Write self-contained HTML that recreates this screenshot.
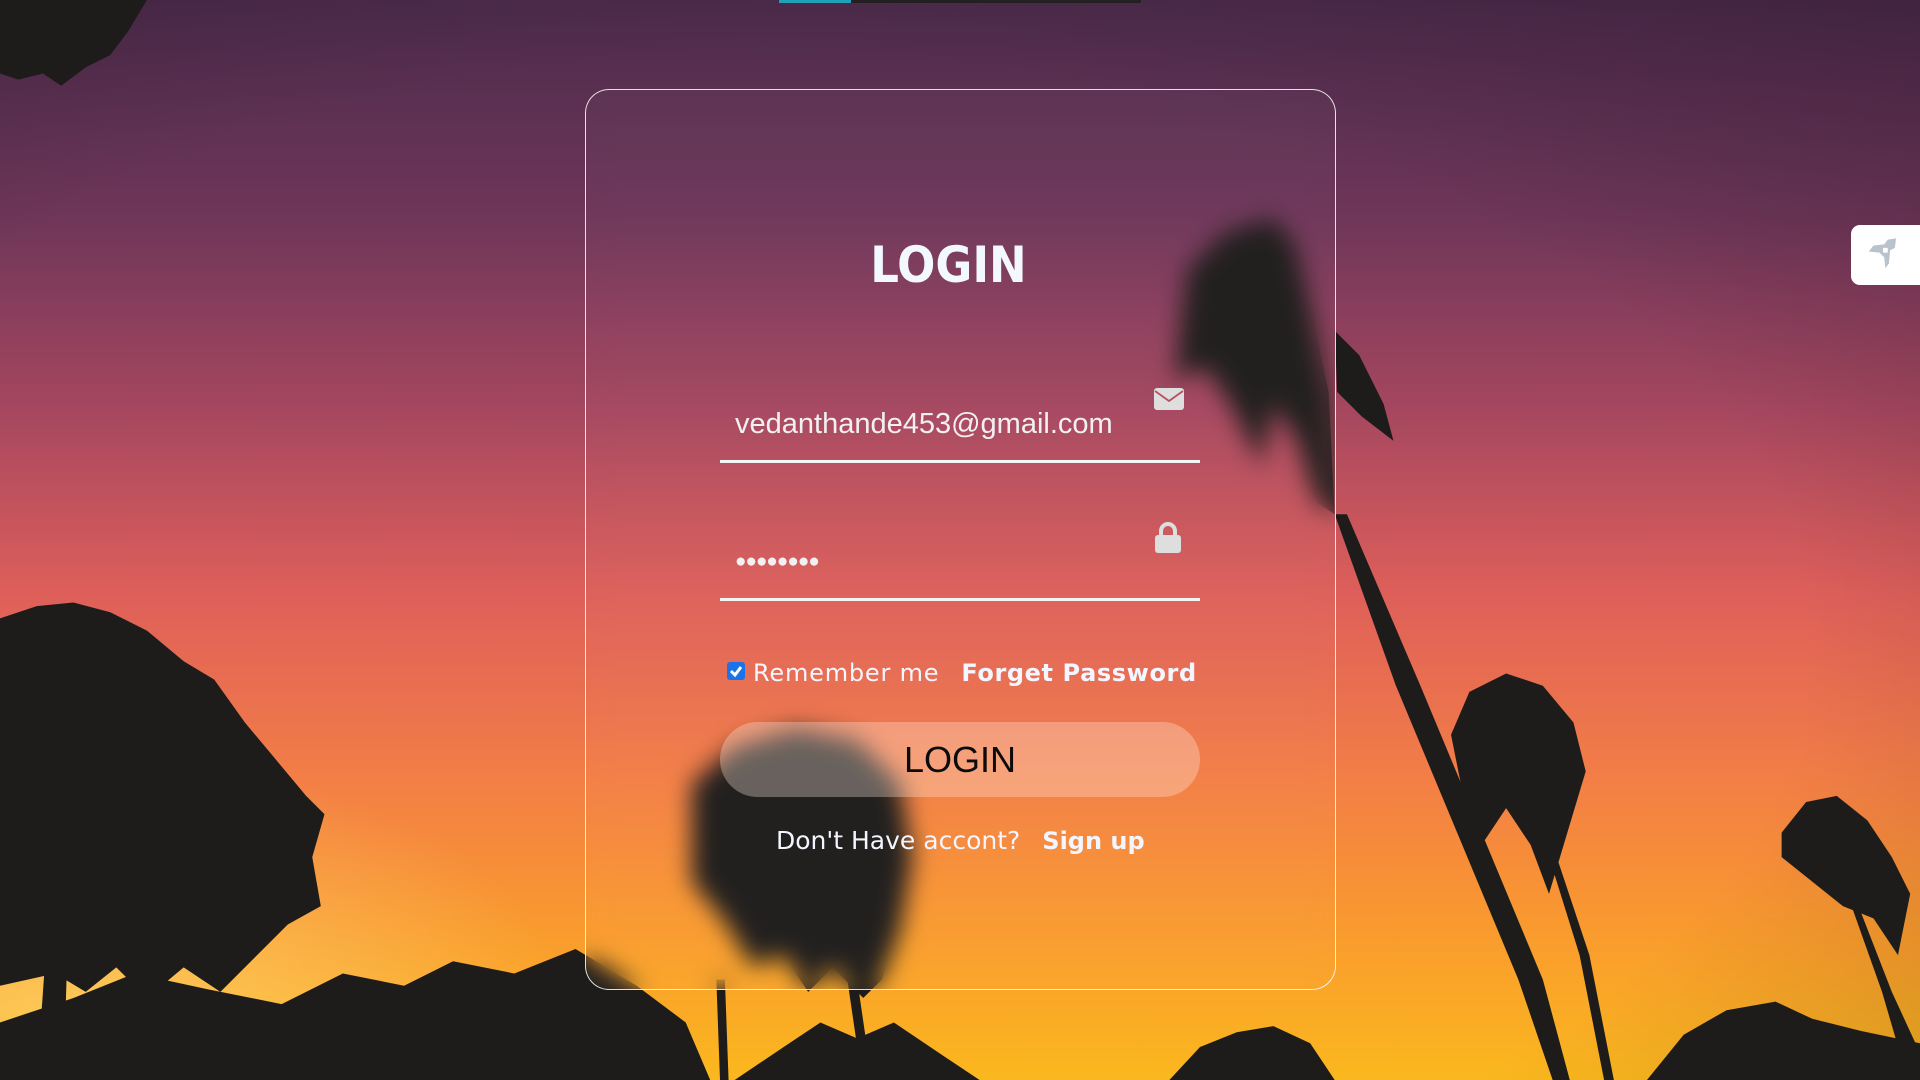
<!DOCTYPE html>
<html><head><meta charset="utf-8">
<style>
html,body{margin:0;padding:0;width:1920px;height:1080px;overflow:hidden;}
body{position:relative;font-family:"Liberation Sans",sans-serif;background:#b04a60;}
#bg{position:absolute;left:0;top:0;width:1920px;height:1080px;}
.card{position:absolute;left:585px;top:89px;width:749px;height:899px;border:1.5px solid rgba(255,255,255,.85);border-radius:24px;backdrop-filter:blur(12px);-webkit-backdrop-filter:blur(12px);background:rgba(255,255,255,.02);}
.title{position:absolute;left:0;width:725px;top:146px;text-align:center;color:#f3f8ff;font:bold 50px "DejaVu Sans Condensed","DejaVu Sans",sans-serif;letter-spacing:0px;}
.line{position:absolute;left:720px;width:480px;height:3px;background:#f4f4f4;}
.email{position:absolute;left:735px;top:408px;color:#f3f0f2;font-size:29px;}
.dots{position:absolute;left:735px;top:551px;color:#f3f0f2;font-size:19px;letter-spacing:-1px;}
.row{position:absolute;top:659px;left:727px;color:#f3f6ff;font:24px "DejaVu Sans",sans-serif;white-space:nowrap;letter-spacing:.8px;}
.cb{display:inline-block;width:18px;height:18px;background:#1a73e8;border-radius:3px;vertical-align:1px;margin-right:8px;position:relative;}
.btn{position:absolute;left:720px;top:722px;width:480px;height:75px;border-radius:38px;background:rgba(255,235,225,.32);text-align:center;line-height:75px;font-size:36px;color:#0b0b0b;}
.bot{position:absolute;top:826px;left:776px;color:#f3f6ff;font:25px "DejaVu Sans",sans-serif;white-space:nowrap;}
</style></head><body>
<svg id="bg" viewBox="0 0 1568 882" preserveAspectRatio="none">
<defs>
<linearGradient id="g" x1="0" y1="0" x2="0" y2="1">
<stop offset="0" stop-color="#4c2b4b"/>
<stop offset=".2" stop-color="#6e3659"/>
<stop offset=".38" stop-color="#a6475f"/>
<stop offset=".55" stop-color="#de5f5a"/>
<stop offset=".72" stop-color="#f37e46"/>
<stop offset=".86" stop-color="#f99a2e"/>
<stop offset="1" stop-color="#fbb81e"/>
</linearGradient>
<radialGradient id="v" cx=".4" cy=".6" r=".9">
<stop offset=".6" stop-color="#000" stop-opacity="0"/>
<stop offset="1" stop-color="#1a0a1a" stop-opacity=".25"/>
</radialGradient>
<radialGradient id="y" cx=".05" cy=".95" r=".25">
<stop offset="0" stop-color="#ffe080" stop-opacity=".6"/>
<stop offset="1" stop-color="#ffe080" stop-opacity="0"/>
</radialGradient>
</defs>
<rect width="1568" height="882" fill="url(#g)"/>
<rect width="1568" height="882" fill="url(#v)"/>
<rect width="1568" height="882" fill="url(#y)"/>
<g fill="#1e1c1b">
<path d="M0 0H120L105 25 90 45 70 55 50 70 35 60 15 65 0 60Z"/>
<path d="M0 505 30 495 60 492 90 500 120 515 150 540 175 555 200 590 225 620 250 650 265 665 255 700 262 740 235 755 205 785 180 810 150 790 120 815 95 790 70 810 45 795 0 805Z"/>
<path d="M30 882 40 740 48 700 56 740 52 882Z"/>
<path d="M0 835 60 815 110 795 170 808 230 820 280 795 330 805 370 785 420 795 470 775 520 805 560 835 580 882H0Z"/>
<path d="M600 882 640 855 670 835 700 848 730 835 770 862 800 882Z"/>
<path d="M955 882 980 855 1010 843 1040 838 1070 852 1090 882Z"/>
<path d="M1345 882 1375 845 1410 825 1450 818 1480 832 1520 842 1568 852V882Z"/>
<path d="M1090 420 1100 420 1160 560 1210 680 1260 800 1282 882H1268L1240 800 1190 680 1140 560Z"/>
<path d="M1262 690 1268 690 1298 780 1318 882H1310L1290 780Z"/>
<path d="M1505 720 1510 720 1545 810 1568 860V882H1558L1537 810Z"/>
<path d="M1185 600 1200 565 1230 550 1260 560 1285 590 1295 630 1280 680 1265 730 1250 690 1230 660 1210 690 1195 650Z"/>
<path d="M1455 680 1475 655 1500 650 1525 670 1545 700 1560 730 1550 780 1530 750 1505 740 1480 720 1455 700Z"/>
<path d="M1090 270 1110 290 1130 330 1138 360 1112 340 1092 320Z"/>
<path d="M970 220 1000 190 1040 178 1058 200 1070 250 1085 320 1090 420 1075 410 1060 360 1040 330 1030 380 1005 330 985 300 960 310 965 260Z"/>
<path d="M565 640 600 610 650 595 700 605 735 640 745 700 735 760 720 800 705 815 680 790 660 810 640 780 615 790 590 750 565 720Z"/>
<path d="M585 800 592 800 595 882H588Z"/>
<path d="M692 800 700 800 712 882H704Z"/>
</g>
</svg>
<div style="position:absolute;left:779px;top:0;width:362px;height:3px;background:#242021"></div>
<div style="position:absolute;left:779px;top:0;width:72px;height:3px;background:#1fa2b8"></div>
<div class="card"><div class="title">LOGIN</div></div>
<div class="email">vedanthande453@gmail.com</div>
<svg style="position:absolute;left:1154px;top:388px" width="30" height="22" viewBox="0 0 30 22"><rect x="0" y="0" width="30" height="22" rx="3" fill="#dedede"/><path d="M1 3 15 13 29 3" fill="none" stroke="#b8505e" stroke-width="1.8"/></svg>
<div class="line" style="top:460px"></div>
<div class="dots">●●●●●●●●</div>
<svg style="position:absolute;left:1154px;top:522px" width="28" height="31" viewBox="0 0 28 31"><path d="M7 14V9a7 7 0 0 1 14 0v5" fill="none" stroke="#dedede" stroke-width="4"/><rect x="1" y="13" width="26" height="18" rx="3" fill="#dedede"/></svg>
<div class="line" style="top:598px"></div>
<div class="row"><span class="cb"><svg width="18" height="18" viewBox="0 0 18 18" style="position:absolute;left:0;top:0"><path d="M4 9 8 13 14 5" fill="none" stroke="#fff" stroke-width="3"/></svg></span>Remember me<span style="font-weight:bold;margin-left:22px;letter-spacing:.6px;font-size:24px">Forget Password</span></div>
<div class="btn">LOGIN</div>
<div class="bot">Don't Have accont?<span style="font-weight:bold;margin-left:22px;font-size:24px">Sign up</span></div>
<div style="position:absolute;left:1851px;top:225px;width:69px;height:60px;background:#fff;border-radius:9px 0 0 9px"></div>
<svg style="position:absolute;left:1864px;top:236px" width="38" height="38" viewBox="0 0 32 32"><path d="M20 3 27 2 26 10 22 12 21 23 18 27 17 18 13 14 4 13 8 8 17 7Z M16 10 16 14 20 14 20 10Z" fill="#b9c3cd" fill-rule="evenodd"/></svg>
</body></html>
